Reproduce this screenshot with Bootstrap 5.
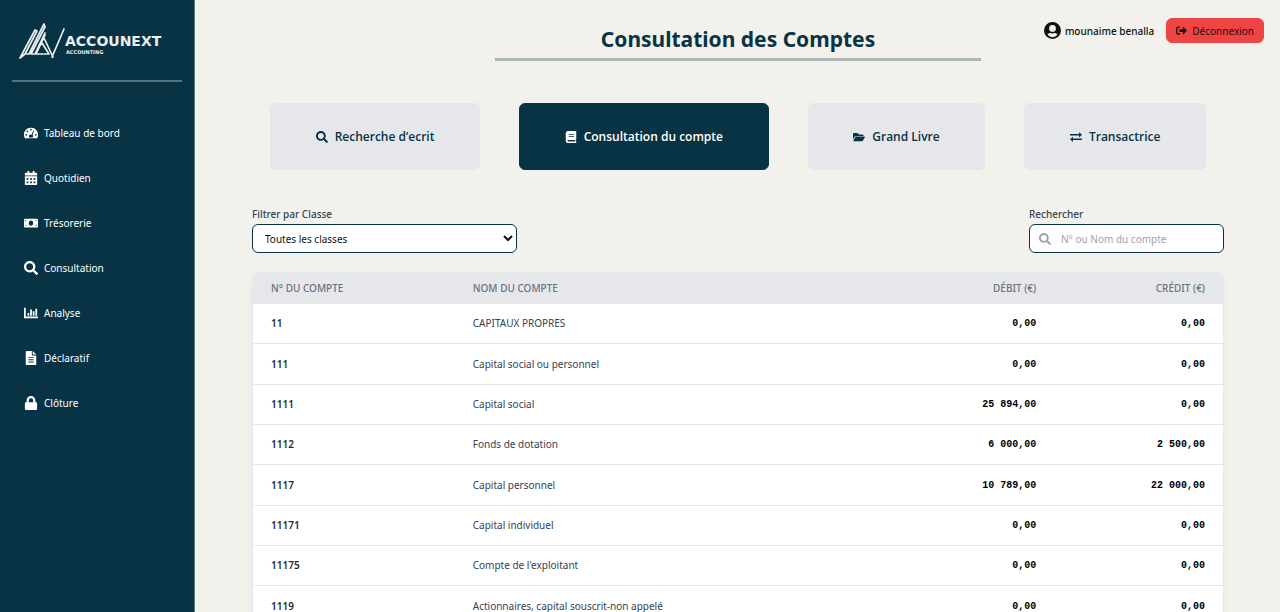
<!DOCTYPE html>
<html lang="fr">
<head>
<meta charset="utf-8">
<meta name="viewport" content="width=device-width, initial-scale=1">
<title>Accounext – Consultation des Comptes</title>
<link rel="stylesheet" href="https://cdn.jsdelivr.net/npm/bootstrap@5.3.0/dist/css/bootstrap.min.css">
<style>
  :root { --navy: #083344; --sand: #f2f1ec; --mist: #e5e7eb; }
  body { font-family: "Noto Sans", "Open Sans", sans-serif; font-size: 10px; line-height: 16px; background: var(--sand); color: #111; }
  svg { fill: currentColor; flex: none; }
  .side { flex: 0 0 195px; background: var(--navy); border-right: 1px solid #5d7a85; }
  .side hr { margin: 18px 0 34px; border-top: 2px solid #9fb0b7; opacity: .5; }
  .brand-logo { width: 154px; height: 42px; margin: 20px 0 0 6px; fill: #e9eef0; font-family: "DejaVu Sans", sans-serif; font-weight: 700; }
  .side .nav-link { height: 33px; margin-bottom: 12px; padding: 0 12px; gap: 6px; color: #fff; font-size: 10px; }
  .side .nav-link svg { width: 14px; height: 14px; }
  .shell { padding: 0 56px 0 57px; }
  .topbar { height: 103px; }
  .page-title { font-size: 21px; line-height: 32px; font-weight: 700; color: var(--navy); margin: 23px 0 0; padding-bottom: 3px; width: 50%; border-bottom: 3px solid #abb7b7; text-align: center; }
  .account { position: absolute; top: 18px; right: 16px; gap: 4px; font-weight: 500; }
  .btn-exit { --bs-btn-bg: #ef4444; --bs-btn-hover-bg: #dc2626; --bs-btn-color: #1c1010; --bs-btn-border-color: #ef4444; height: 25px; margin-left: 8px; padding: 0 9px; gap: 5px; font-size: 10px; line-height: 16px; border-radius: 6px; }
  .tabs { gap: 39px; padding: 0 18px; }
  .btn-tab { --bs-btn-bg: var(--mist); --bs-btn-color: var(--navy); --bs-btn-border-color: var(--mist); --bs-btn-active-bg: var(--navy); --bs-btn-active-color: #fff; --bs-btn-active-border-color: var(--navy); flex: 1 1 auto; height: 67px; padding: 0; gap: 7px; font-family: "Open Sans", sans-serif; font-size: 12px; font-weight: 600; border-radius: 6px; }
  .filters { margin: 36px 0 19px; }
  .filters label { color: #374151; margin-bottom: 2px; display: block; font-weight: 500; }
  .field { height: 29px; font-size: 10px; line-height: 16px; background: #fff; border: 1px solid var(--navy); border-radius: 6px; }
  .field-select { width: 265px; padding: 0 0 0 8px; color: #111; }
  .field-search { width: 195px; padding: 0 9px; gap: 10px; color: #9ca3af; }
  .field-search input { min-width: 0; border: 0; outline: 0; padding: 0; background: transparent; }
  .field-search input::placeholder { color: #9ca3af; }
  .sheet { border: 1px solid var(--mist); border-radius: 8px; overflow: hidden; box-shadow: 0 4px 6px #0000000d; background: #fff; }
  .sheet table { table-layout: fixed; }
  .sheet th, .sheet td { padding: 0 18px; vertical-align: middle; border-bottom: 1px solid var(--mist); }
  .sheet thead th { height: 30px; background: var(--mist); color: #6b7280; font-weight: 500; }
  .sheet tbody tr { height: 40px; }
  .sheet tbody tr:nth-child(3n+2) { height: 41px; }
  .sheet tbody th { font-weight: 600; color: #1f2937; }
  .sheet tbody td { color: #374151; }
  .sheet tbody td.amount { padding-top: 2px; font-family: "Liberation Mono", monospace; font-weight: 700; color: #000; }
</style>
</head>
<body>
<svg class="d-none">
  <symbol id="i-search" viewBox="0 0 512 512"><path d="M505 442.700 405.300 343c-4.500-4.500-10.600-7-17-7H372c27.600-35.300 44-79.700 44-128C416 93.100 322.900 0 208 0S0 93.100 0 208s93.100 208 208 208c48.300 0 92.700-16.400 128-44v16.300c0 6.400 2.500 12.500 7 17l99.700 99.700c9.400 9.400 24.600 9.400 33.900 0l28.300-28.300c9.400-9.400 9.400-24.600.1-34zM208 336c-70.700 0-128-57.200-128-128 0-70.700 57.200-128 128-128 70.700 0 128 57.200 128 128 0 70.700-57.200 128-128 128z"/></symbol>
</svg>
<div class="d-flex min-vh-100">
  <aside class="side px-2">
    <div class="px-1">
      <svg class="brand-logo d-block" viewBox="0 0 154 42" role="img" aria-label="Accounext Accounting">
        <g fill="none" stroke="#e9eef0" stroke-width="1.700" stroke-linejoin="round" stroke-linecap="round">
          <path d="M2 38 17 10l2 1L7 34h4L26 4l1 3-14 27h4L27 13M27 15 18 34h13L24 23M26 18l9 19M2 38l5-4M34 37 46 9"/>
        </g>
        <text x="47" y="26" font-size="14">ACCOUNEXT</text>
        <text x="48" y="34" font-size="5">ACCOUNTING</text>
      </svg>
      <hr>
    </div>
    <nav class="nav flex-column px-1" aria-label="Menu principal">
      <a class="nav-link d-flex align-items-center" href="#"><svg viewBox="0 0 16 16"><path fill-rule="evenodd" d="M8 2a8 8 0 0 0-7 12h14A8 8 0 0 0 8 2Zm0 1a1 1 0 1 1 0 2 1 1 0 0 1 0-2ZM4 5a1 1 0 1 1 0 2 1 1 0 0 1 0-2ZM2.500 9a1 1 0 1 1 0 2 1 1 0 0 1 0-2Zm11 0a1 1 0 1 1 0 2 1 1 0 0 1 0-2ZM10.500 5l1 .4-1.700 5a2 2 0 0 1 .1 2.600H6.100a2 2 0 0 1 2.700-2.900Z"/></svg>Tableau de bord</a>
      <a class="nav-link d-flex align-items-center" href="#"><svg viewBox="0 0 16 16"><path fill-rule="evenodd" d="M4 0h2v2h4V0h2v2h2q1 0 1 1v2H1V3q0-1 1-1h2ZM1 6h14v9q0 1-1 1H2q-1 0-1-1Zm2 2v2h2V8Zm4 0v2h2V8Zm4 0v2h2V8Zm-8 4v2h2v-2Zm4 0v2h2v-2Zm4 0v2h2v-2Z"/></svg>Quotidien</a>
      <a class="nav-link d-flex align-items-center" href="#"><svg viewBox="0 0 16 16"><path fill-rule="evenodd" d="M1 3h14q1 0 1 1v8q0 1-1 1H1q-1 0-1-1V4q0-1 1-1Zm.5 1.500V6L3 4.500Zm11.500 0L14.500 6V4.500ZM1.500 10v1.500H3Zm13 0L13 11.500h1.500ZM8 5c-3.400 0-3.400 6 0 6s3.400-6 0-6Z"/></svg>Trésorerie</a>
      <a class="nav-link d-flex align-items-center" href="#"><svg><use href="#i-search"/></svg>Consultation</a>
      <a class="nav-link d-flex align-items-center" href="#"><svg viewBox="0 0 16 16"><path d="M0 2h2v10h14v2H0ZM4 8h2v3H4Zm3-4h2v7H7Zm3 2h2v5h-2Zm3-3h2v8h-2Z"/></svg>Analyse</a>
      <a class="nav-link d-flex align-items-center" href="#"><svg viewBox="0 0 16 16"><path fill-rule="evenodd" d="M3 0h6v5h5v10q0 1-1 1H3q-1 0-1-1V1q0-1 1-1Zm7 0 4 4h-4ZM5 7v1h6V7Zm0 2.500v1h6v-1ZM5 12v1h6v-1Z"/></svg>Déclaratif</a>
      <a class="nav-link d-flex align-items-center" href="#"><svg viewBox="0 0 16 16"><path fill-rule="evenodd" d="M3 7V5a5 5 0 0 1 10 0v2h.5q1.500 0 1.500 1.500v6q0 1.500-1.500 1.500h-11Q1 16 1 14.500v-6Q1 7 2.500 7Zm2.500 0h5V5a2.500 2.500 0 0 0-5 0Z"/></svg>Clôture</a>
    </nav>
  </aside>
  <main class="flex-grow-1 position-relative shell">
    <header class="topbar d-flex justify-content-center align-items-start">
      <h1 class="page-title">Consultation des Comptes</h1>
      <div class="account d-flex align-items-center">
        <svg width="17" height="17" viewBox="0 0 16 16"><path fill-rule="evenodd" d="M8 0a8 8 0 1 1 0 16A8 8 0 0 1 8 0Zm0 2.800a3.200 3.200 0 1 0 0 6.400 3.200 3.200 0 0 0 0-6.400ZM3.300 12a6 6 0 0 0 9.400 0c-.7-1-1.600-1.600-2.700-1.600-1.300.5-2.700.5-4 0-1.100 0-2 .6-2.700 1.600Z"/></svg>
        <span>mounaime benalla</span>
        <button type="button" class="btn btn-exit d-flex align-items-center"><svg width="11" height="11" viewBox="0 0 16 16"><path d="M6 2v2H3q-1 0-1 1v6q0 1 1 1h3v2H3q-3 0-3-3V5q0-3 3-3Zm4 0 6 6-6 6v-4H5V6h5Z"/></svg>Déconnexion</button>
      </div>
    </header>
    <div class="tabs d-flex">
      <button type="button" class="btn btn-tab d-flex align-items-center justify-content-center"><svg width="12" height="12"><use href="#i-search"/></svg>Recherche d’ecrit</button>
      <button type="button" class="btn btn-tab active d-flex align-items-center justify-content-center"><svg width="12" height="12" viewBox="0 0 16 16"><path fill-rule="evenodd" d="M4 0h10q1 0 1 1v10q0 1-.8 1v2h.8v2H4q-3 0-3-3V3q0-3 3-3Zm1 4v1h7V4Zm0 2.500v1h7v-1ZM4 12q-2 1 0 2h9v-2Z"/></svg>Consultation du compte</button>
      <button type="button" class="btn btn-tab d-flex align-items-center justify-content-center"><svg width="12" height="12" viewBox="0 0 16 16"><path d="M0 11V4q0-1.500 1.500-1.500H6l2 2h4.500Q14 4.500 14 6v.5H4.500Q3 6.500 2.300 7.800ZM4.500 7.300H15q1.300 0 .8 1l-2.300 4q-.5 1.200-1.500 1.200H1.500q-1.300 0-.7-1.200l2.500-4.200q.4-.8 1.200-.8Z"/></svg>Grand Livre</button>
      <button type="button" class="btn btn-tab d-flex align-items-center justify-content-center"><svg width="12" height="12" viewBox="0 0 16 16"><path d="M0 4h12V1.500L16 5l-4 3.500V6H0Zm16 6H4V7.500L0 11l4 3.500V12h12Z"/></svg>Transactrice</button>
    </div>
    <div class="filters d-flex justify-content-between">
      <div>
        <label for="classe">Filtrer par Classe</label>
        <select id="classe" class="field field-select"><option>Toutes les classes</option></select>
      </div>
      <div>
        <label for="recherche">Rechercher</label>
        <div class="field field-search d-flex align-items-center"><svg width="12" height="12"><use href="#i-search"/></svg><input id="recherche" type="text" placeholder="N° ou Nom du compte"></div>
      </div>
    </div>
    <div class="sheet">
      <table class="w-100">
        <colgroup><col style="width:20.800%"><col style="width:41.200%"><col style="width:20.600%"><col style="width:17.400%"></colgroup>
        <thead><tr><th scope="col">N° DU COMPTE</th><th scope="col">NOM DU COMPTE</th><th scope="col" class="text-end">DÉBIT (€)</th><th scope="col" class="text-end">CRÉDIT (€)</th></tr></thead>
        <tbody>
          <tr><th scope="row">11</th><td>CAPITAUX PROPRES</td><td class="amount text-end">0,00</td><td class="amount text-end">0,00</td></tr>
          <tr><th scope="row">111</th><td>Capital social ou personnel</td><td class="amount text-end">0,00</td><td class="amount text-end">0,00</td></tr>
          <tr><th scope="row">1111</th><td>Capital social</td><td class="amount text-end">25 894,00</td><td class="amount text-end">0,00</td></tr>
          <tr><th scope="row">1112</th><td>Fonds de dotation</td><td class="amount text-end">6 000,00</td><td class="amount text-end">2 500,00</td></tr>
          <tr><th scope="row">1117</th><td>Capital personnel</td><td class="amount text-end">10 789,00</td><td class="amount text-end">22 000,00</td></tr>
          <tr><th scope="row">11171</th><td>Capital individuel</td><td class="amount text-end">0,00</td><td class="amount text-end">0,00</td></tr>
          <tr><th scope="row">11175</th><td>Compte de l'exploitant</td><td class="amount text-end">0,00</td><td class="amount text-end">0,00</td></tr>
          <tr><th scope="row">1119</th><td>Actionnaires, capital souscrit-non appelé</td><td class="amount text-end">0,00</td><td class="amount text-end">0,00</td></tr>
        </tbody>
      </table>
    </div>
  </main>
</div>
<script src="https://cdn.jsdelivr.net/npm/bootstrap@5.3.0/dist/js/bootstrap.bundle.min.js"></script>
</body>
</html>
